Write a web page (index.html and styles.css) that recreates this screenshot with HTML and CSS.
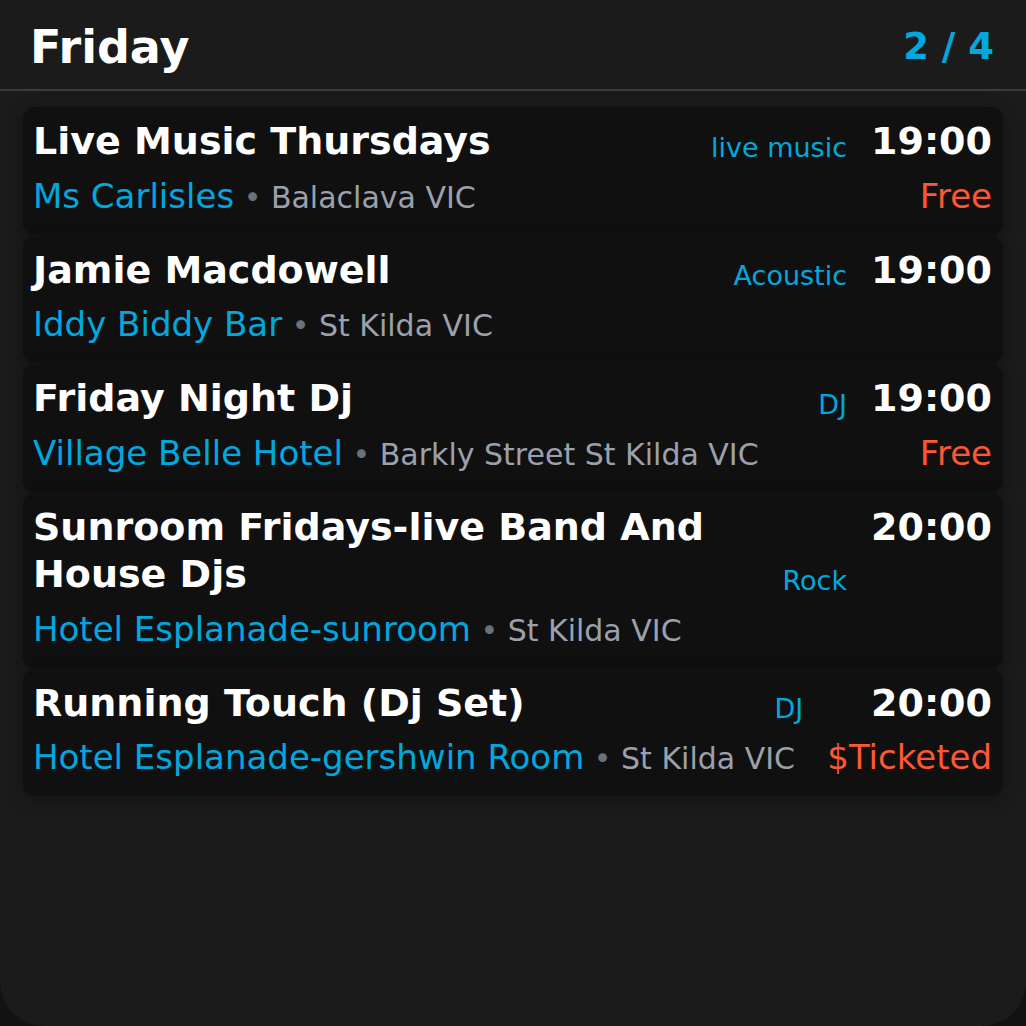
FILE: index.html
```html
<!DOCTYPE html>
<html lang="en">
<head>
<meta charset="utf-8">
<title>Friday</title>
<link rel="stylesheet" href="styles.css">
</head>
<body>
<div class="widget">
  <header class="head">
    <h1 class="day">Friday</h1>
    <span class="count">2 / 4</span>
  </header>
  <div class="list">
    <article class="card">
      <h2 class="title">Live Music Thursdays</h2>
      <span class="genre">live music</span>
      <span class="time">19:00</span>
      <div class="venue"><span class="vname">Ms Carlisles</span><span class="dot"> • </span><span class="loc">Balaclava VIC</span></div>
      <span class="price">Free</span>
    </article>
    <article class="card">
      <h2 class="title">Jamie Macdowell</h2>
      <span class="genre">Acoustic</span>
      <span class="time">19:00</span>
      <div class="venue"><span class="vname">Iddy Biddy Bar</span><span class="dot"> • </span><span class="loc">St Kilda VIC</span></div>
    </article>
    <article class="card">
      <h2 class="title">Friday Night Dj</h2>
      <span class="genre">DJ</span>
      <span class="time">19:00</span>
      <div class="venue"><span class="vname">Village Belle Hotel</span><span class="dot"> • </span><span class="loc">Barkly Street St Kilda VIC</span></div>
      <span class="price">Free</span>
    </article>
    <article class="card">
      <h2 class="title">Sunroom Fridays-live Band And House Djs</h2>
      <span class="genre">Rock</span>
      <span class="time">20:00</span>
      <div class="venue"><span class="vname">Hotel Esplanade-sunroom</span><span class="dot"> • </span><span class="loc">St Kilda VIC</span></div>
    </article>
    <article class="card">
      <h2 class="title">Running Touch (Dj Set)</h2>
      <span class="genre">DJ</span>
      <span class="time">20:00</span>
      <div class="venue"><span class="vname">Hotel Esplanade-gershwin Room</span><span class="dot"> • </span><span class="loc">St Kilda VIC</span></div>
      <span class="price">$Ticketed</span>
    </article>
  </div>
</div>
</body>
</html>
```

FILE: styles.css
```css
html, body {
  margin: 0;
  padding: 0;
  background: #121212;
}

body {
  font-family: "DejaVu Sans", "Liberation Sans", sans-serif;
  color: #ffffff;
}

.widget {
  width: 1026px;
  height: 1026px;
  box-sizing: border-box;
  background: #1b1b1b;
  border-radius: 0 0 44px 44px;
  overflow: hidden;
}

.head {
  height: 91px;
  box-sizing: border-box;
  padding: 4px 32px 0 30px;
  display: flex;
  align-items: center;
  justify-content: space-between;
  border-bottom: 2px solid #363b44;
}

.day {
  margin: 0;
  font-size: 46px;
  font-weight: bold;
  color: #ffffff;
}

.count {
  font-size: 37px;
  font-weight: bold;
  color: #00a8df;
}

.list {
  padding: 16px 23px;
  display: flex;
  flex-direction: column;
  gap: 1px;
}

.card {
  background: #101010;
  border-radius: 12px;
  box-shadow: 0 4px 18px rgba(0, 0, 0, 0.3);
  padding: 11px 11px 19px 10px;
  display: grid;
  grid-template-columns: 1fr auto auto;
  column-gap: 24px;
  row-gap: 10px;
}

.title {
  grid-column: 1;
  grid-row: 1;
  margin: 0;
  font-size: 38px;
  line-height: 47.5px;
  font-weight: bold;
  color: #ffffff;
}

.genre {
  grid-column: 2;
  grid-row: 1;
  align-self: end;
  font-size: 27px;
  padding-bottom: 3px;
  color: #00a8df;
}

.time {
  grid-column: 3;
  grid-row: 1;
  align-self: start;
  justify-self: end;
  font-size: 38px;
  line-height: 47.5px;
  font-weight: bold;
  color: #ffffff;
}

.venue {
  grid-column: 1 / 3;
  grid-row: 2;
  font-size: 34px;
  white-space: nowrap;
}

.vname {
  color: #00a8df;
}

.dot {
  font-size: 30px;
  color: #6b717b;
}

.loc {
  font-size: 30px;
  color: #9ba1ac;
}

.price {
  grid-column: 3;
  grid-row: 2;
  justify-self: end;
  align-self: end;
  font-size: 34px;
  color: #ff5733;
}
```
